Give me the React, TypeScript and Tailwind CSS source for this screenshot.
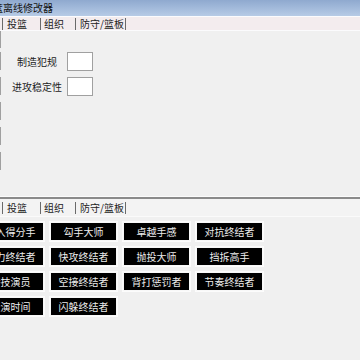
import React from "react";

const font = { fontFamily: '"Noto Sans CJK SC", "Noto Sans", sans-serif' };

const buttons = [
  "切入得分手", "勾手大师", "卓越手感", "对抗终结者",
  "强力终结者", "快攻终结者", "抛投大师", "挡拆高手",
  "特技演员", "空接终结者", "背打惩罚者", "节奏终结者",
  "表演时间", "闪躲终结者",
];

function Tabs() {
  return (
    <div className="flex items-center h-full text-[10px] leading-none text-[#222]">
      <div className="ml-[2px] w-px h-[12px] bg-[#6a6a6a]" />
      <div className="w-[37px] pl-[4px]">投篮</div>
      <div className="w-px h-[12px] bg-[#6a6a6a]" />
      <div className="w-[34px] pl-[3px]">组织</div>
      <div className="w-px h-[12px] bg-[#6a6a6a]" />
      <div className="w-[49px] pl-[4px]">防守/篮板</div>
      <div className="w-px h-[12px] bg-[#6a6a6a]" />
    </div>
  );
}

function CutBox({ first }: { first?: boolean }) {
  return (
    <div
      className={
        first
          ? "shrink-0 ml-[-20px] w-[21px] h-[17px] border-r border-b border-[#a0a0a0] bg-white"
          : "shrink-0 ml-[-20px] w-[21px] h-[18px] border border-[#a0a0a0] bg-white"
      }
    />
  );
}

export default function App() {
  return (
    <div className="w-[360px] h-[360px] overflow-hidden bg-[#f0f0f0]" style={font}>
      {/* title bar */}
      <div className="h-[16px] bg-gradient-to-b from-[#8fa9cf] to-[#b6cbe6] flex items-center overflow-hidden">
        <span className="ml-[-7px] text-[10px] leading-none text-[#141414] whitespace-nowrap">篮离线修改器</span>
      </div>
      {/* tab strip 1 */}
      <div className="h-[15px] border-t border-b border-[#fbfbfd] bg-[#f3ecee]">
        <Tabs />
      </div>
      {/* upper panel */}
      <div className="h-[165px] flex items-start">
        <div className="flex flex-col w-px">
          <CutBox first />
          <div className="mt-[4px] flex flex-col gap-[7px]">
            <CutBox />
            <CutBox />
            <CutBox />
            <CutBox />
            <CutBox />
          </div>
        </div>
        <div className="ml-[11px] mt-[21px] grid grid-cols-[50px_26px] auto-rows-[19px] content-start gap-x-[5px] gap-y-[6px] items-center">
          <div className="text-[10px] leading-none text-center text-[#222] whitespace-nowrap">制造犯规</div>
          <div className="h-[19px] border border-[#a0a0a0] bg-white" />
          <div className="text-[10px] leading-none text-center text-[#222] whitespace-nowrap">进攻稳定性</div>
          <div className="h-[19px] border border-[#a0a0a0] bg-white" />
        </div>
      </div>
      {/* separator */}
      <div className="h-px bg-[#fbfbfb]" />
      <div className="h-[2px] bg-[#8a8a8a]" />
      {/* tab strip 2 */}
      <div className="h-[18px] bg-[#f3f3f3] border-b border-[#fafafa]">
        <Tabs />
      </div>
      {/* buttons */}
      <div className="mt-[5px] ml-[-23px] grid grid-cols-[repeat(4,67px)] gap-x-[6px] gap-y-[6px]">
        {buttons.map((b) => (
          <div
            key={b}
            className="h-[19px] bg-black border border-[#f8f8f8] outline outline-1 outline-[#fcfcfc] flex items-center justify-center text-[10px] leading-none text-[#ececec] whitespace-nowrap"
          >
            {b}
          </div>
        ))}
      </div>
    </div>
  );
}
